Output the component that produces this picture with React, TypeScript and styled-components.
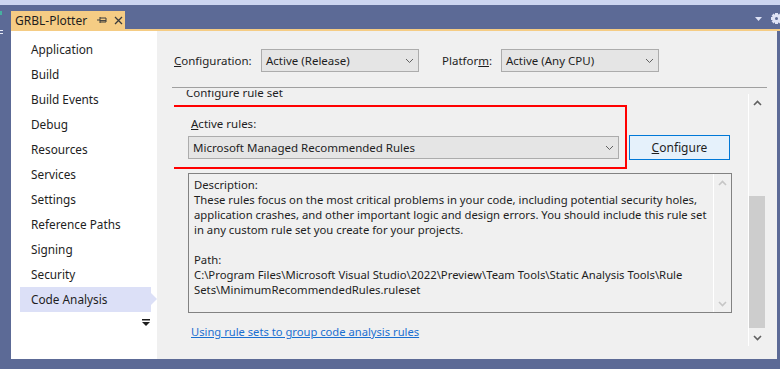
import React from "react";
import styled, { createGlobalStyle } from "styled-components";

const FONT = `"Noto Sans", "Open Sans", sans-serif`;
const FS = "11.5px";

const Global = createGlobalStyle`
  html, body { margin: 0; padding: 0; background: #5c6a96; }
  body { font-family: ${FONT}; font-size: ${FS}; color: #1e1e1e; }
  * { box-sizing: border-box; }
`;

const Frame = styled.div`
  width: 780px;
  height: 369px;
  overflow: hidden;
  display: flex;
  flex-direction: column;
  background: #5c6a96;
`;

const TopStrip = styled.div`
  height: 5px;
  background: #ccd5f0;
  flex: none;
`;

const TitleBar = styled.div`
  height: 24px;
  flex: none;
  display: flex;
  align-items: flex-end;
  padding-left: 11px;
`;

const Tab = styled.div`
  height: 18px;
  width: 114px;
  flex: none;
  background: #f5cc84;
  display: flex;
  align-items: center;
  padding-left: 4px;
  white-space: nowrap;
  color: #1e1e1e;
`;

const TabTitle = styled.span`
  margin-right: 10px;
  font-size: 12px;
`;

const TabIcon = styled.svg`
  flex: none;
  margin-right: 7px;
`;

const TitleTools = styled.div`
  margin-left: auto;
  align-self: center;
  display: flex;
  align-items: center;
  gap: 9px;
  margin-right: -2px;
  margin-top: 3px;
`;

const Accent = styled.div`
  height: 2px;
  flex: none;
  background: #f5cc84;
  margin-left: 11px;
`;

const Body = styled.div`
  flex: 1;
  display: flex;
  min-height: 0;
  padding: 0 3px 10px 11px;
  position: relative;
`;

const LeftMarks = styled.svg`
  position: absolute;
  left: 0;
  top: -22px;
`;

const Sidebar = styled.nav`
  width: 146px;
  flex: none;
  background: #ffffff;
  display: flex;
  flex-direction: column;
  padding-top: 6px;
  font-size: 11.8px;
`;

const NavItem = styled.div<{ $active?: boolean }>`
  position: relative;
  height: 25px;
  line-height: 25px;
  margin-left: 9px;
  width: 131px;
  padding-left: 11px;
  white-space: nowrap;
  background: ${(p) => (p.$active ? "#dce0f7" : "transparent")};
  &::after {
    content: "";
    display: ${(p) => (p.$active ? "block" : "none")};
    position: absolute;
    right: -6px;
    top: 6px;
    border-left: 6px solid #dce0f7;
    border-top: 6px solid transparent;
    border-bottom: 6px solid transparent;
  }
`;

const OverflowMark = styled.svg`
  align-self: flex-end;
  margin: 7px 7px 0 0;
`;

const Main = styled.main`
  flex: 1;
  background: #f0f0f0;
  display: flex;
  flex-direction: column;
  padding: 18px 12px 0 17px;
  min-width: 0;
`;

const ConfigRow = styled.div`
  display: flex;
  align-items: center;
  height: 23px;
`;

const Label = styled.label<{ $w: number; $gap?: number }>`
  width: ${(p) => p.$w}px;
  margin-left: ${(p) => p.$gap ?? 0}px;
  flex: none;
  white-space: nowrap;
`;

const Select = styled.div<{ $w: number }>`
  width: ${(p) => p.$w}px;
  height: 23px;
  flex: none;
  background: #e5e5e5;
  border: 1px solid #acacac;
  display: flex;
  align-items: center;
  padding: 0 4px 0 4px;
  white-space: nowrap;
`;

const SelectText = styled.span`
  flex: 1;
`;

const Divider = styled.div`
  height: 1px;
  background: #a0a0a0;
  margin: 15px -2px 0 -2px;
  flex: none;
`;

const ScrollRegion = styled.div`
  flex: 1;
  display: flex;
  min-height: 0;
`;

const Viewport = styled.div`
  flex: 1;
  overflow: hidden;
  margin-top: 2px;
  display: flex;
  flex-direction: column;
`;

const GroupTitle = styled.div`
  margin: -5px 0 0 12px;
  line-height: 16px;
  white-space: nowrap;
`;

const RulesRow = styled.div`
  display: flex;
  margin: 4px 0 0 -3px;
`;

const Highlight = styled.div`
  width: 456px;
  height: 64px;
  border: 2px solid #ff0000;
  padding: 9px 6px 0 15px;
  display: flex;
  flex-direction: column;
  gap: 4px;
`;

const SmallLabel = styled.div`
  line-height: 16px;
  margin-left: 3px;
`;

const Button = styled.div`
  width: 101px;
  height: 25px;
  margin: 30px 0 0 2px;
  background: #e5f1fb;
  border: 1px solid #0078d7;
  display: flex;
  align-items: center;
  justify-content: center;
  font-size: 12px;
`;

const DescBox = styled.div`
  width: 544px;
  height: 140px;
  margin: 4px 0 0 14px;
  border: 1px solid #828282;
  display: flex;
`;

const DescText = styled.div`
  flex: 1;
  padding: 3px 0 0 5px;
  line-height: 15px;
  font-size: 11.3px;
  white-space: nowrap;
  overflow: hidden;
`;

const Line = styled.div`
  height: 15px;
`;

const ScrollBar = styled.div<{ $faded?: boolean }>`
  width: ${(p) => (p.$faded ? 18 : 17)}px;
  flex: none;
  border-left: 1px solid #ffffff;
  background: #f0f0f0;
  display: flex;
  flex-direction: column;
`;

const OuterBar = styled(ScrollBar)`
  margin: 6px 0 13px 0;
`;

const ArrowBtn = styled.div`
  height: 17px;
  flex: none;
  display: flex;
  align-items: center;
  justify-content: center;
`;

const Track = styled.div`
  flex: 1;
  display: flex;
  flex-direction: column;
`;

const Thumb = styled.div<{ $top: number; $h: number }>`
  margin-top: ${(p) => p.$top}px;
  height: ${(p) => p.$h}px;
  background: #cdcdcd;
`;

const Link = styled.a`
  margin: 11px 0 0 17px;
  line-height: 16px;
  font-size: 11.2px;
  color: #1a6fd1;
  text-decoration: underline;
  white-space: nowrap;
  align-self: flex-start;
`;

const Chevron = ({ dir, color, bold }: { dir: "up" | "down"; color: string; bold?: boolean }) => (
  <svg width="9" height="6" viewBox="0 0 9 6">
    <path
      d={dir === "down" ? "M1 1 L4.5 4.5 L8 1" : "M1 5 L4.5 1.5 L8 5"}
      fill="none"
      stroke={color}
      strokeWidth={bold ? 1.6 : 1}
    />
  </svg>
);

const navItems = [
  "Application",
  "Build",
  "Build Events",
  "Debug",
  "Resources",
  "Services",
  "Settings",
  "Reference Paths",
  "Signing",
  "Security",
  "Code Analysis",
];

const descLines = [
  "Description:",
  "These rules focus on the most critical problems in your code, including potential security holes,",
  "application crashes, and other important logic and design errors. You should include this rule set",
  "in any custom rule set you create for your projects.",
  "",
  "Path:",
  "C:\\Program Files\\Microsoft Visual Studio\\2022\\Preview\\Team Tools\\Static Analysis Tools\\Rule",
  "Sets\\MinimumRecommendedRules.ruleset",
];

export default function App() {
  return (
    <Frame>
      <Global />
      <TopStrip />
      <TitleBar>
        <Tab>
          <TabTitle>GRBL-Plotter</TabTitle>
          <TabIcon width="10" height="8" viewBox="0 0 10 8">
            <path d="M0 4 H3 M3 1 V7 M3 2 H9 V6 H3 M3 4.6 H9" fill="none" stroke="#3b3b3b" strokeWidth="1" />
          </TabIcon>
          <TabIcon width="9" height="9" viewBox="0 0 9 9">
            <path d="M1 1 L8 8 M8 1 L1 8" stroke="#3b3b3b" strokeWidth="1.3" />
          </TabIcon>
        </Tab>
        <TitleTools>
          <svg width="7" height="4" viewBox="0 0 7 4">
            <path d="M0 0 H7 L3.5 4 Z" fill="#dfe3f5" />
          </svg>
          <svg width="11" height="11" viewBox="0 0 11 11">
            <g fill="#dfe3f5">
              <rect x="4" y="0" width="3" height="11" />
              <rect x="0" y="4" width="11" height="3" />
              <rect x="4" y="0" width="3" height="11" transform="rotate(45 5.5 5.5)" />
              <rect x="0" y="4" width="11" height="3" transform="rotate(45 5.5 5.5)" />
              <circle cx="5.5" cy="5.5" r="3.6" />
            </g>
            <circle cx="5.5" cy="5.5" r="1.5" fill="#5c6a96" />
          </svg>
        </TitleTools>
      </TitleBar>
      <Accent />
      <Body>
        <LeftMarks width="4" height="30" viewBox="0 0 4 30">
          <rect x="0" y="2" width="2" height="4" fill="#46b0a0" />
          <rect x="0" y="21" width="3" height="1" fill="#e8ecf8" />
          <rect x="0" y="24" width="3" height="1" fill="#e8ecf8" />
        </LeftMarks>
        <Sidebar>
          {navItems.map((n) => (
            <NavItem key={n} $active={n === "Code Analysis"}>
              {n}
            </NavItem>
          ))}
          <OverflowMark width="8" height="7" viewBox="0 0 8 7">
            <rect x="0" y="0" width="8" height="1.5" fill="#1e1e1e" />
            <path d="M0 3 H8 L4 7 Z" fill="#1e1e1e" />
          </OverflowMark>
        </Sidebar>
        <Main>
          <ConfigRow>
            <Label $w={87}>
              <u>C</u>onfiguration:
            </Label>
            <Select $w={158}>
              <SelectText>Active (Release)</SelectText>
              <Chevron dir="down" color="#606060" />
            </Select>
            <Label $w={59} $gap={23}>
              Platfor<u>m</u>:
            </Label>
            <Select $w={158}>
              <SelectText>Active (Any CPU)</SelectText>
              <Chevron dir="down" color="#606060" />
            </Select>
          </ConfigRow>
          <Divider />
          <ScrollRegion>
            <Viewport>
              <GroupTitle>Configure rule set</GroupTitle>
              <RulesRow>
                <Highlight>
                  <SmallLabel>
                    <u>A</u>ctive rules:
                  </SmallLabel>
                  <Select $w={431}>
                    <SelectText>Microsoft Managed Recommended Rules</SelectText>
                    <Chevron dir="down" color="#606060" />
                  </Select>
                </Highlight>
                <Button>
                  <span>
                    <u>C</u>onfigure
                  </span>
                </Button>
              </RulesRow>
              <DescBox>
                <DescText>
                  {descLines.map((l, i) => (
                    <Line key={i}>{l}</Line>
                  ))}
                </DescText>
                <ScrollBar $faded>
                  <ArrowBtn>
                    <Chevron dir="up" color="#c6c6c6" bold />
                  </ArrowBtn>
                  <Track />
                  <ArrowBtn>
                    <Chevron dir="down" color="#c6c6c6" bold />
                  </ArrowBtn>
                </ScrollBar>
              </DescBox>
              <Link>Using rule sets to group code analysis rules</Link>
            </Viewport>
            <OuterBar>
              <ArrowBtn>
                <Chevron dir="up" color="#606060" bold />
              </ArrowBtn>
              <Track>
                <Thumb $top={85} $h={132} />
              </Track>
              <ArrowBtn>
                <Chevron dir="down" color="#606060" bold />
              </ArrowBtn>
            </OuterBar>
          </ScrollRegion>
        </Main>
      </Body>
    </Frame>
  );
}
